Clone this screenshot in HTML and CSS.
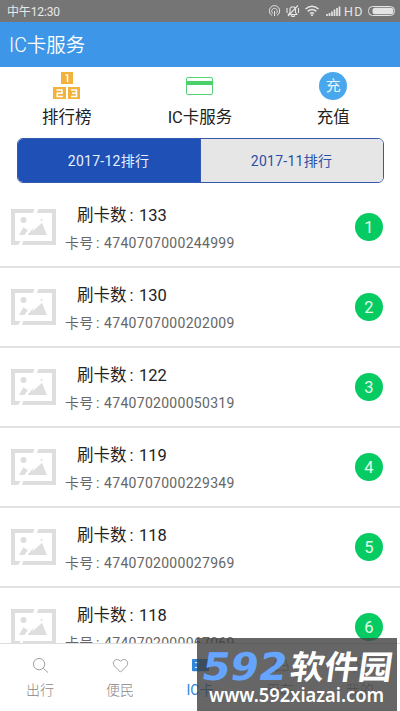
FILE: index.html
```html
<!DOCTYPE html>
<html lang="zh-CN">
<head>
<meta charset="utf-8">
<title>IC卡服务</title>
<link rel="stylesheet" href="styles.css">
</head>
<body>
<svg class="defs" aria-hidden="true">
  <symbol id="placeholder" viewBox="0 0 45 37">
    <path fill="#dedede" fill-rule="evenodd" d="M0 0H45V36H0ZM4 4V32H41V4Z"/>
    <circle cx="12.500" cy="11" r="3" fill="#dedede"/>
    <path fill="#dedede" d="M8 26L12.500 18L16 21L24 14L20 26ZM17 26L31 14L36 26Z"/>
    <circle cx="30.500" cy="11" r="1" fill="#dedede"/>
    <path fill="#fff" d="M23.500 0H27.500L21 14L27 13L12.500 31L10.500 37H6.500L18 19L19 12Z"/>
  </symbol>
</svg>
<div class="screen">
  <header class="status">
    <span class="time">中午12:30</span>
    <svg class="status-icons" viewBox="0 0 130 22" fill="none" stroke="#e4e4e4">
      <path d="M3.200 15.500A5.200 5.200 0 1 1 7.800 15.500M4 13.500A2.800 2.800 0 1 1 7 13.500M5.500 11V16"/>
      <path d="M19.500 14.500H28L26.500 12.500V9C26 6 21.500 6 21 9V12.500ZM22 15.500Q24 17.500 26 15.500M18 8V13M29.500 8V13M19 16L29 5.500" stroke-width="1.100"/>
      <path d="M36.500 9Q43 3.500 49.500 9M38.700 11.300Q43 7.700 47.300 11.300M41 13.500Q43 12 45 13.500" stroke-width="1.500"/>
      <path d="M42 14.500L43 16L44 14.500" fill="#e4e4e4"/>
      <path d="M58 14V16M60.500 13V16M63 11.500V16M65.500 9.500V16M68 8V16M70.500 6.500V16" stroke-width="1.700"/>
      <rect x="99.500" y="6.500" width="26" height="9" rx="4"/>
      <rect x="103.500" y="7.800" width="20.800" height="6.400" rx="2.500" fill="#e4e4e4" stroke="none"/>
      <text class="hd" x="75" y="16" textLength="18.500">HD</text>
    </svg>
  </header>
  <div class="titlebar"><h1>IC卡服务</h1></div>
  <nav class="services">
    <a class="service">
      <svg class="service-icon" viewBox="0 0 28 28">
        <path fill="#f3b23c" d="M8 0H20V12H8ZM0 15H13V27H0ZM15 15H27V27H15Z"/>
        <path fill="none" stroke="#fff" stroke-width="1.500" d="M12.500 3H14.500V10M3.500 18H9V21.200H4.200V24.500H10M18 18H23.500V24.500H18M19 21.200H23.500"/>
      </svg>
      <span>排行榜</span>
    </a>
    <a class="service">
      <svg class="service-icon" viewBox="0 0 28 28">
        <rect x=".5" y="5.500" width="26" height="17" rx="1.500" fill="none" stroke="#55d477"/>
        <path fill="#4bd16c" d="M0 9H27V13H0Z"/>
      </svg>
      <span>IC卡服务</span>
    </a>
    <a class="service">
      <span class="recharge">充</span>
      <span>充值</span>
    </a>
  </nav>
  <div class="segments">
    <div class="segment active">2017-12排行</div>
    <div class="segment">2017-11排行</div>
  </div>
  <main class="list">
    <article class="row"><svg class="thumb"><use href="#placeholder"/></svg><div class="info"><p class="count">刷卡数<i>:</i>133</p><p class="card">卡号<i>:</i>4740707000244999</p></div><b class="rank">1</b></article>
    <article class="row"><svg class="thumb"><use href="#placeholder"/></svg><div class="info"><p class="count">刷卡数<i>:</i>130</p><p class="card">卡号<i>:</i>4740707000202009</p></div><b class="rank">2</b></article>
    <article class="row"><svg class="thumb"><use href="#placeholder"/></svg><div class="info"><p class="count">刷卡数<i>:</i>122</p><p class="card">卡号<i>:</i>4740702000050319</p></div><b class="rank">3</b></article>
    <article class="row"><svg class="thumb"><use href="#placeholder"/></svg><div class="info"><p class="count">刷卡数<i>:</i>119</p><p class="card">卡号<i>:</i>4740707000229349</p></div><b class="rank">4</b></article>
    <article class="row"><svg class="thumb"><use href="#placeholder"/></svg><div class="info"><p class="count">刷卡数<i>:</i>118</p><p class="card">卡号<i>:</i>4740702000027969</p></div><b class="rank">5</b></article>
    <article class="row"><svg class="thumb"><use href="#placeholder"/></svg><div class="info"><p class="count">刷卡数<i>:</i>118</p><p class="card">卡号<i>:</i>4740702000067069</p></div><b class="rank">6</b></article>
  </main>
  <nav class="tabs">
    <a class="tab"><svg viewBox="0 0 18 18"><circle cx="7.500" cy="7.500" r="6"/><path d="M12 12L17 16.500"/></svg><span>出行</span></a>
    <a class="tab"><svg viewBox="0 0 18 18"><path d="M9 16L2.500 9.500C-1 5.500 4.500-.5 9 4.500C13.500-.5 19 5.500 15.500 9.500Z"/></svg><span>便民</span></a>
    <a class="tab current"><svg viewBox="0 0 18 18"><rect x="0" y="2" width="18" height="13" rx="1" fill="#2f86d8" stroke="none"/><path d="M3 6H7M3 11H6" stroke="#fff"/></svg><span>IC卡</span></a>
    <a class="tab"><svg viewBox="0 0 18 18"><path d="M1 14V9L4 3H14L17 9V14ZM1 9H17M5 14V16M13 14V16"/></svg><span>用车</span></a>
    <a class="tab"><svg viewBox="0 0 18 18"><circle cx="9" cy="5" r="4"/><path d="M2 17Q9 5 16 17"/></svg><span>我的</span></a>
  </nav>
  <svg class="watermark" viewBox="0 0 200 73">
    <rect width="200" height="73" fill="#404040" fill-opacity=".8"/>
    <g transform="translate(3 42) skewX(-10)"><text class="mark-number" x="0" y="0" textLength="85" lengthAdjust="spacingAndGlyphs">592</text></g>
    <g transform="translate(92 40.500) skewX(-8)"><text class="mark-name" x="0" y="0" textLength="102" lengthAdjust="spacingAndGlyphs">软件园</text></g>
    <text class="mark-url" x="12" y="64" textLength="175" lengthAdjust="spacingAndGlyphs">www.592xiazai.com</text>
  </svg>
</div>
</body>
</html>
```
FILE: styles.css
```css
* { box-sizing: border-box; }
body { margin: 0; background: #fff; font-family: Roboto, "Noto Sans CJK SC", sans-serif; }
h1, p { margin: 0; font-weight: 400; }
.defs { position: absolute; width: 0; height: 0; }
.screen { position: relative; width: 400px; height: 711px; overflow: hidden; display: flex; flex-direction: column; }
.status { height: 22px; flex: none; display: flex; justify-content: space-between; background: #757575; color: #e8e8e8; padding: 0 1px 0 7px; }
.time { font-size: 12px; line-height: 24px; letter-spacing: -.15px; }
.status-icons { width: 130px; height: 22px; flex: none; }
.hd { font-size: 12.500px; fill: #e4e4e4; stroke: none; }
.titlebar { height: 45px; flex: none; background: #3d96e8; color: #fff; padding-left: 9px; }
h1 { font-size: 19.500px; font-weight: 350; line-height: 47px; letter-spacing: 0; }
.services { flex: none; height: 71px; padding-top: 5px; display: grid; grid-template-columns: repeat(3, 1fr); }
.service { display: flex; flex-direction: column; align-items: center; font-size: 16.500px; line-height: 20px; color: #222; gap: 8px; }
.service-icon { width: 28px; height: 28px; }
.recharge { width: 28px; height: 28px; border-radius: 50%; background: #49a8ed; color: #e5f6ff; font-size: 15px; line-height: 28px; text-align: center; }
.segments { flex: none; display: flex; width: 367px; height: 45px; margin-left: 16.500px; border: 1px solid #3458ad; border-radius: 6px; overflow: hidden; }
.segment { flex: 1; background: #e6e6e6; color: #2c50a5; text-align: center; font-size: 14px; letter-spacing: .25px; line-height: 45px; border-left: 1px solid #3458ad; }
.segment.active { background: #1f50b5; color: #e8f1ff; border-left: 0; }
.list { flex: 1; min-height: 0; overflow: hidden; padding-top: 5px; }
.row { height: 80px; border-bottom: 2px solid #e2e2e2; display: flex; align-items: flex-start; padding: 0 17px 0 11px; }
.thumb { width: 45px; height: 37px; margin-top: 21px; flex: none; }
.info { flex: 1; padding-left: 9px; padding-top: 16px; }
.count { font-size: 16.500px; line-height: 24px; padding-left: 12px; color: #222; }
.card { font-size: 14px; letter-spacing: .29px; line-height: 20px; margin-top: 5px; color: #666; }
.info i { display: inline-block; font-style: normal; width: .75em; padding-right: .15em; text-align: center; }
.rank { width: 28px; height: 28px; margin-top: 25px; border-radius: 50%; background: #06cb62; color: #e0ffec; font-size: 16.500px; font-weight: 400; line-height: 30px; text-align: center; }
.tabs { flex: none; height: 68px; border-top: 1px solid #ddd; background: #fff; display: grid; grid-template-columns: repeat(5, 1fr); }
.tab { display: flex; flex-direction: column; align-items: center; padding-top: 13px; gap: 6px; font-size: 14px; font-weight: 300; line-height: 20px; color: #888; }
.tab svg { width: 17px; height: 17px; fill: none; stroke: #999; stroke-width: 1; }
.tab.current { color: #2f86d8; font-weight: 400; }
.watermark { position: absolute; left: 197px; top: 638px; width: 200px; height: 73px; }
.mark-number { font: 700 38px "DejaVu Sans", sans-serif; fill: #65a5ff; }
.mark-name { font: 700 33px "Noto Sans CJK SC", sans-serif; fill: #fff; }
.mark-url { font: 600 19px "Noto Sans", sans-serif; fill: #fff; }
```
